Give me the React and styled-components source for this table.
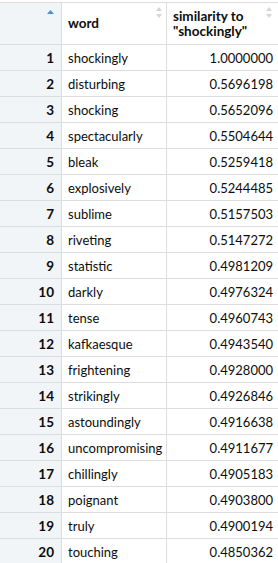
import React from "react";
import styled, { createGlobalStyle } from "styled-components";

const Global = createGlobalStyle`
  html, body { margin: 0; padding: 0; background: #fff; }
  body { font-family: "Segoe UI", Lato, "Liberation Sans", sans-serif; font-size: 13px; color: #0d0d0d; }
`;

const data = [
  ["shockingly", "1.0000000"],
  ["disturbing", "0.5696198"],
  ["shocking", "0.5652096"],
  ["spectacularly", "0.5504644"],
  ["bleak", "0.5259418"],
  ["explosively", "0.5244485"],
  ["sublime", "0.5157503"],
  ["riveting", "0.5147272"],
  ["statistic", "0.4981209"],
  ["darkly", "0.4976324"],
  ["tense", "0.4960743"],
  ["kafkaesque", "0.4943540"],
  ["frightening", "0.4928000"],
  ["strikingly", "0.4926846"],
  ["astoundingly", "0.4916638"],
  ["uncompromising", "0.4911677"],
  ["chillingly", "0.4905183"],
  ["poignant", "0.4903800"],
  ["truly", "0.4900194"],
  ["touching", "0.4850362"],
];

const Wrap = styled.div`
  padding-top: 2px;
  width: 278px;
`;

const Grid = styled.div`
  display: grid;
  grid-template-columns: 62px 105px 111px;
  border-top: 1px solid #dddddd;
`;

const HeadCell = styled.div`
  position: relative;
  box-sizing: border-box;
  height: 42px;
  border-bottom: 1px solid #dddddd;
  border-right: ${(p) => (p.$last ? "none" : "1px solid #dddddd")};
  background: ${(p) => (p.$index ? "#f2f5f8" : "#fff")};
  font-weight: bold;
  font-size: 13.5px;
  color: #0d0d0d;
  padding: 0 6px;
  display: flex;
  align-items: center;
  line-height: 14.5px;
`;

const HeadText = styled.span`
  display: block;
`;

const Cell = styled.div`
  height: 26px;
  box-sizing: border-box;
  border-bottom: 1px solid #dddddd;
  border-right: ${(p) => (p.$last ? "none" : "1px solid #dddddd")};
  background: ${(p) => (p.$index ? "#f2f5f8" : "#fff")};
  display: flex;
  align-items: center;
  justify-content: ${(p) => (p.$right ? "flex-end" : "flex-start")};
  padding: ${(p) => (p.$index ? "0 7px 0 0" : p.$right ? "0 5px 0 0" : "0 6px")};
  font-weight: ${(p) => (p.$index ? "bold" : "normal")};
  font-size: ${(p) => (p.$index ? "13.5px" : "13px")};
  white-space: nowrap;
`;

const SortIcon = styled.svg`
  position: absolute;
  top: ${(p) => p.$top}px;
  right: ${(p) => p.$right}px;
`;

const Both = ({ right }) => (
  <SortIcon $top={4} $right={right} width="6" height="11" viewBox="0 0 6 11">
    <path d="M3 0 L6 4 L0 4 Z" fill="#d6d6d6" />
    <path d="M3 11 L6 7 L0 7 Z" fill="#d6d6d6" />
  </SortIcon>
);

export default function App() {
  return (
    <Wrap>
      <Global />
      <Grid>
        <HeadCell $index>
          <SortIcon $top={7} $right={7} width="7" height="4" viewBox="0 0 7 4">
            <path d="M3.5 0 L7 4 L0 4 Z" fill="#4a8fd6" />
          </SortIcon>
        </HeadCell>
        <HeadCell>
          <HeadText>word</HeadText>
          <Both right={4} />
        </HeadCell>
        <HeadCell $last>
          <HeadText>similarity to<br />"shockingly"</HeadText>
          <Both right={6} />
        </HeadCell>
        {data.map(([w, v], i) => (
          <React.Fragment key={i}>
            <Cell $index $right>{i + 1}</Cell>
            <Cell>{w}</Cell>
            <Cell $right $last>{v}</Cell>
          </React.Fragment>
        ))}
      </Grid>
    </Wrap>
  );
}
